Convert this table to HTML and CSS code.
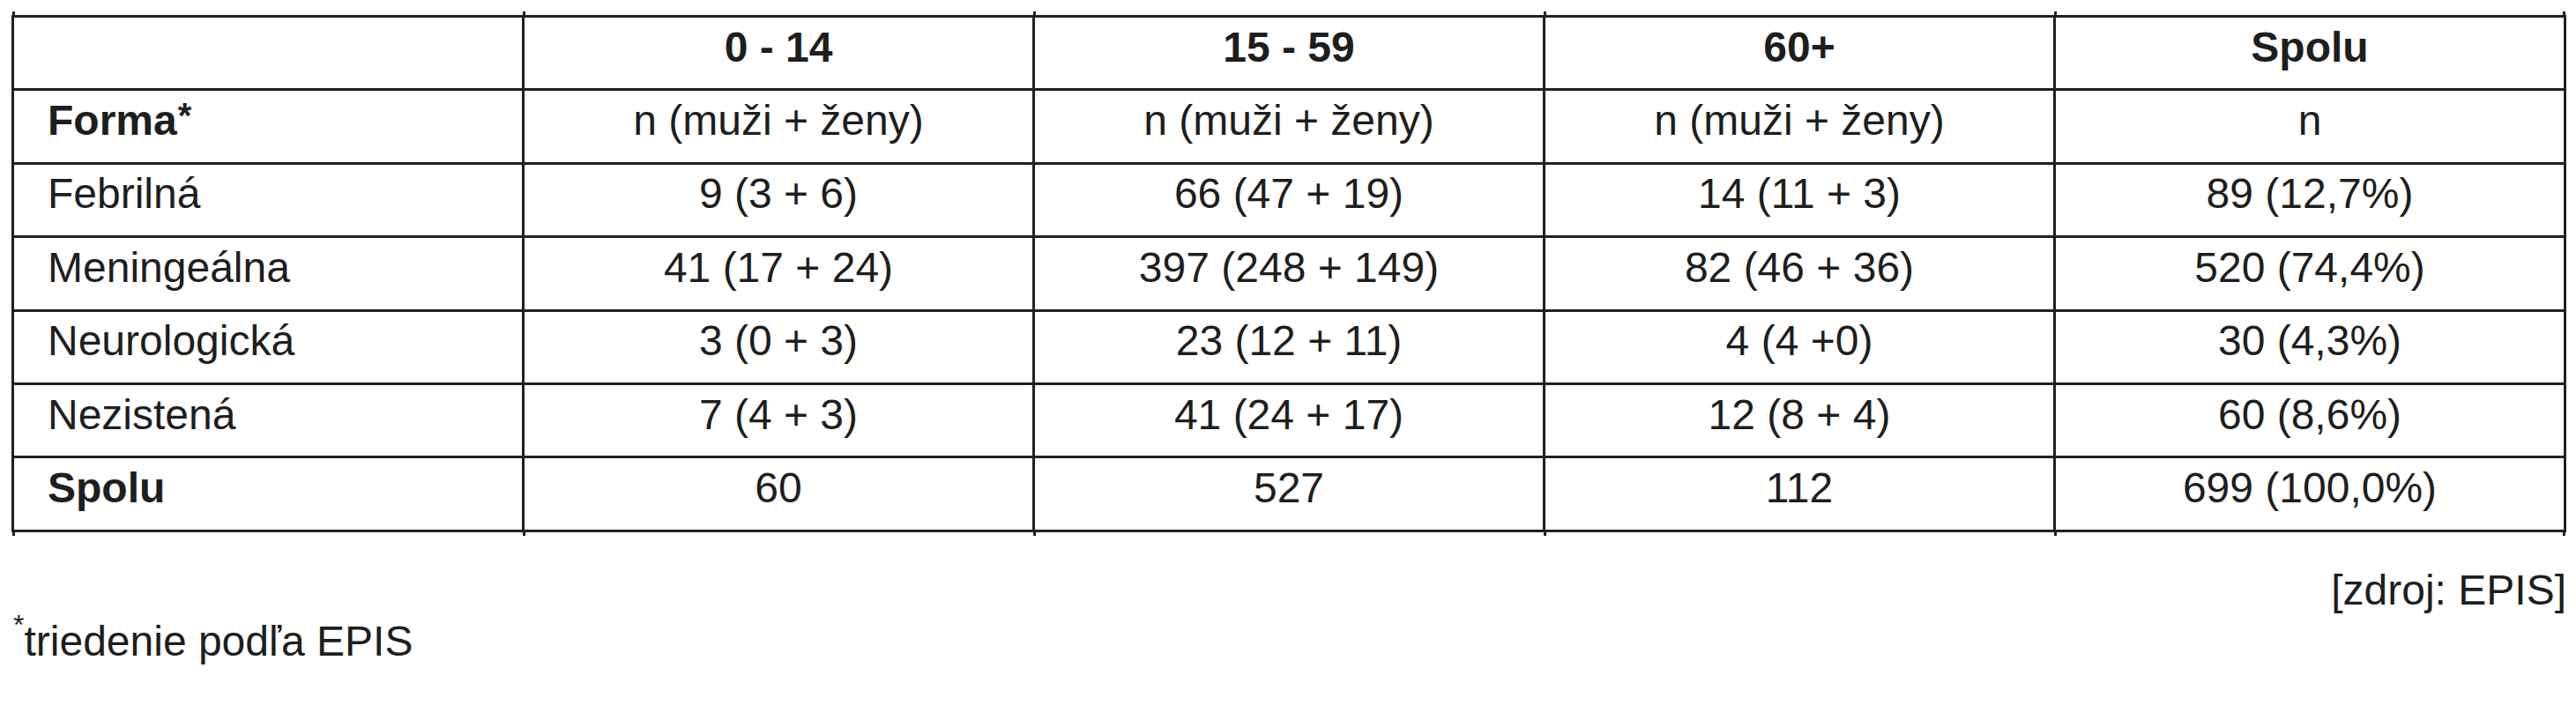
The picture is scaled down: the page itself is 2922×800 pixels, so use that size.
FILE: index.html
```html
<!DOCTYPE html>
<html lang="sk">
<head>
<meta charset="utf-8">
<title>Formy ochorenia podľa veku</title>
<link rel="stylesheet" href="styles.css">
</head>
<body>
<div class="page">
  <table class="data">
    <colgroup>
      <col class="c"><col class="c"><col class="c"><col class="c"><col class="c">
    </colgroup>
    <thead>
      <tr>
        <th class="lbl"></th>
        <th>0 - 14</th>
        <th>15 - 59</th>
        <th>60+</th>
        <th>Spolu</th>
      </tr>
    </thead>
    <tbody>
      <tr>
        <td class="lbl b">Forma<span class="star">*</span></td>
        <td>n (muži + ženy)</td>
        <td>n (muži + ženy)</td>
        <td>n (muži + ženy)</td>
        <td>n</td>
      </tr>
      <tr>
        <td class="lbl">Febrilná</td>
        <td>9 (3 + 6)</td>
        <td>66 (47 + 19)</td>
        <td>14 (11 + 3)</td>
        <td>89 (12,7%)</td>
      </tr>
      <tr>
        <td class="lbl">Meningeálna</td>
        <td>41 (17 + 24)</td>
        <td>397 (248 + 149)</td>
        <td>82 (46 + 36)</td>
        <td>520 (74,4%)</td>
      </tr>
      <tr>
        <td class="lbl">Neurologická</td>
        <td>3 (0 + 3)</td>
        <td>23 (12 + 11)</td>
        <td>4 (4 +0)</td>
        <td>30 (4,3%)</td>
      </tr>
      <tr>
        <td class="lbl">Nezistená</td>
        <td>7 (4 + 3)</td>
        <td>41 (24 + 17)</td>
        <td>12 (8 + 4)</td>
        <td>60 (8,6%)</td>
      </tr>
      <tr class="last">
        <td class="lbl b">Spolu</td>
        <td>60</td>
        <td>527</td>
        <td>112</td>
        <td>699 (100,0%)</td>
      </tr>
    </tbody>
  </table>
  <p class="source">[zdroj: EPIS]</p>
  <p class="note"><span class="nstar">*</span>triedenie podľa EPIS</p>
</div>
</body>
</html>
```
FILE: styles.css
```css
html, body {
  margin: 0;
  padding: 0;
  background: #fff;
}
body {
  font-family: "Liberation Sans", Arial, sans-serif;
  font-size: 48px;
  color: #1e1e1e;
}
.page {
  width: 2898px;
  padding: 17px 0 0 13px;
}
.data {
  width: 2898px;
  table-layout: fixed;
  border-collapse: collapse;
}
.data col.c {
  width: 20%;
}
.data th,
.data td {
  border: 3px solid #231f20;
  height: 83.4px;
  padding: 0 0 14px 0;
  box-sizing: border-box;
  text-align: center;
  vertical-align: middle;
  font-weight: normal;
  line-height: normal;
  white-space: nowrap;
  position: relative;
}
.data th {
  font-weight: bold;
}
.data .lbl {
  text-align: left;
  padding-left: 38px;
}
.data .b {
  font-weight: bold;
}
.star {
  font-weight: bold;
  font-size: 40px;
  line-height: 0;
  vertical-align: 8px;
  margin-left: 1px;
}
/* small tick marks of the column rules above and below the table */
.data thead th::before,
.data tr.last td::after {
  content: "";
  position: absolute;
  left: -2px;
  width: 3px;
  height: 5px;
  background: #231f20;
}
.data thead th::before {
  top: -7px;
}
.data tr.last td::after {
  bottom: -7px;
}
.data thead th:last-child::after,
.data tr.last td:last-child::before {
  content: "";
  position: absolute;
  right: -2px;
  width: 3px;
  height: 5px;
  background: #231f20;
}
.data thead th:last-child::after {
  top: -7px;
}
.data tr.last td:last-child::before {
  bottom: -7px;
}
.source {
  margin: 37px 0 0 0;
  line-height: 58px;
  text-align: right;
}
.note {
  margin: 0 0 0 2px;
  line-height: 58px;
}
.nstar {
  font-size: 32px;
  line-height: 0;
  vertical-align: 24px;
}
```
